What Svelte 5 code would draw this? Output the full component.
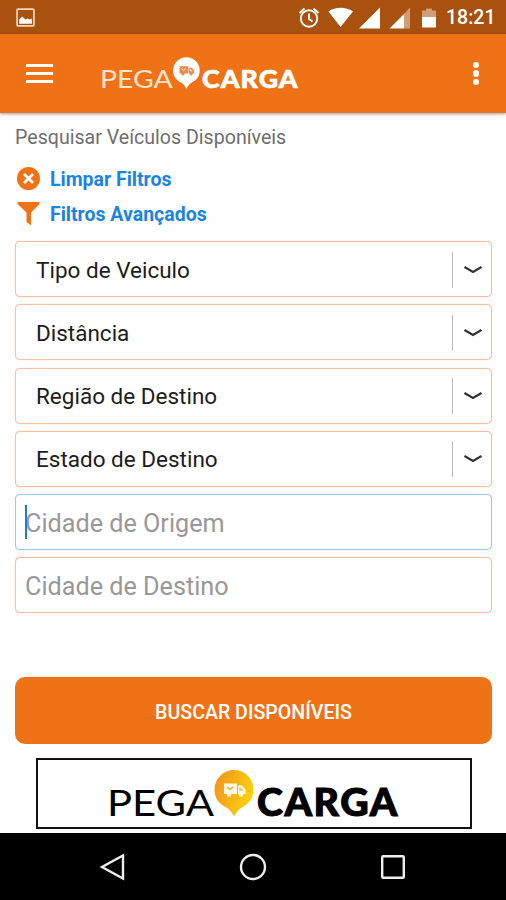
<script lang="ts">
	const selects: string[] = [
		'Tipo de Veiculo',
		'Distância',
		'Região de Destino',
		'Estado de Destino'
	];

	let origin = $state('');
	let destination = $state('');
</script>

{#snippet logo(kind: string)}
	<svg class="logo {kind}" viewBox="0 0 288 48">
		<defs>
			<linearGradient id="pin" x1="0" y1="0" x2="1" y2="0.4">
				<stop offset="0" stop-color="#f0901d" />
				<stop offset="1" stop-color="#fcd00d" />
			</linearGradient>
		</defs>
		<text class="thin" x="-3" y="46" textLength="107" lengthAdjust="spacingAndGlyphs">PEGA</text>
		<path
			class="pin"
			d="M124 0a19.500 19.500 0 0 1 19.500 19.500c0 9-5 14.500-11 17.500-4 2-6.500 6-8.500 9.500-2-3.500-4.500-7.500-8.500-9.500-6-3-11-8.500-11-17.500A19.500 19.500 0 0 1 124 0z"
		/>
		<g class="truck">
			<path d="M114 13.500h13v10.500h-13zM128 15.500h4l3.500 4v4.500h-7.500z" />
			<circle cx="119" cy="24.500" r="2.300" />
			<circle cx="131" cy="24.500" r="2.300" />
		</g>
		<path class="mark" d="M117 17l3 2.500 3-2.500M130 17.500v2.500h3" />
		<text class="heavy" x="147" y="46" textLength="142" lengthAdjust="spacingAndGlyphs">CARGA</text>
	</svg>
{/snippet}

<div class="screen">
	<div class="status">
		<svg class="picture" viewBox="0 0 18 18">
			<rect x="1" y="1" width="16" height="16" rx="1" fill="none" stroke="#f3d5c0" stroke-width="1.6" />
			<path d="M3 15v-4l3-3 3 3 2-1 2 1 2-1v5z" fill="#fff" />
		</svg>
		<svg class="indicators" viewBox="0 0 140 24">
			<g fill="none" stroke="#fff" stroke-width="1.9">
				<circle cx="10" cy="12.500" r="8.200" />
				<path d="M10 7.500v5.500l3.500 2.500M.5 7l5-4.500M19.500 7l-5-4.500" />
			</g>
			<g fill="#fff">
				<path d="M29.500 5.500C36 .5 47 .5 54 5.500L41.500 21z" />
				<path d="M81 1.500v21H60z" />
				<path d="M105.500 7.500v15H90.500z" />
				<path d="M123 10.500h14V21.500h-14z" />
			</g>
			<g fill="#cf9d78">
				<path d="M105.500 7.500l5.500-6v21h-5.500z" />
				<path d="M123 4.500h4v-2h6v2h4v6h-14z" />
			</g>
		</svg>
		<span class="clock">18:21</span>
	</div>

	<header>
		<button class="menu" aria-label="Menu">
			<span></span>
			<span></span>
			<span></span>
		</button>
		{@render logo('white')}
		<button class="more" aria-label="Mais">
			<span></span>
			<span></span>
			<span></span>
		</button>
	</header>

	<main>
		<h1>Pesquisar Veículos Disponíveis</h1>

		<a class="filter" href="#limpar">
			<svg viewBox="0 0 24 24">
				<circle cx="12.500" cy="11.500" r="11.500" fill="#ef7316" />
				<path d="M8 7l9 9m0-9l-9 9" stroke="#fff" stroke-width="2.800" />
			</svg>
			<span>Limpar Filtros</span>
		</a>
		<a class="filter" href="#avancados">
			<svg viewBox="0 0 24 24">
				<path d="M1.500 0h22v2L15 10.500v13L10.500 20v-9.500L1.500 2z" fill="#ef7316" />
			</svg>
			<span>Filtros Avançados</span>
		</a>

		<div class="fields">
			{#each selects as label}
				<button class="field select">
					<span class="label">{label}</span>
					<svg viewBox="0 0 18 8">
						<path d="M.5 1l8.500 5 8.500-5" fill="none" stroke="#333" stroke-width="2.200" />
					</svg>
				</button>
			{/each}
			<div class="field focused">
				<span class="caret"></span>
				<input placeholder="Cidade de Origem" bind:value={origin} />
			</div>
			<div class="field">
				<input placeholder="Cidade de Destino" bind:value={destination} />
			</div>
		</div>

		<button class="search">BUSCAR DISPONÍVEIS</button>

		<div class="banner">
			{@render logo('color')}
		</div>
	</main>

	<nav>
		<svg viewBox="0 0 28 28">
			<path d="M24 2.500v23L3 14z" />
		</svg>
		<svg viewBox="0 0 28 28">
			<circle cx="14" cy="14" r="12" />
		</svg>
		<svg viewBox="0 0 28 28">
			<rect x="3.200" y="3.200" width="21.600" height="21.600" rx="1" />
		</svg>
	</nav>
</div>

<style>
	:global(body) {
		margin: 0;
	}

	.screen {
		display: flex;
		flex-direction: column;
		width: 506px;
		height: 900px;
		overflow: hidden;
		background: #fefefe;
		font-family: Roboto, sans-serif;
	}

	button {
		border: 0;
		padding: 0;
		background: none;
		font-family: inherit;
	}

	svg {
		display: block;
		flex: none;
	}

	.status {
		display: flex;
		align-items: center;
		box-sizing: border-box;
		height: 34px;
		padding: 1px 11px 0 16px;
		background: #a9510f;
	}

	.picture {
		width: 19px;
		height: 19px;
	}

	.indicators {
		width: 140px;
		height: 24px;
		margin-left: auto;
	}

	.clock {
		width: 49px;
		margin-left: 7px;
		color: #fff;
		font-size: 19.5px;
		font-weight: 500;
		line-height: 36px;
		white-space: nowrap;
	}

	header {
		display: flex;
		align-items: center;
		box-sizing: border-box;
		height: 79px;
		padding: 0 27px 0 26px;
		background: #ef7316;
		box-shadow: 0 1px 3px rgba(0, 0, 0, 0.4);
	}

	.menu {
		display: grid;
		gap: 5px;
		width: 27px;
	}

	.menu span {
		height: 3px;
		background: #fff;
	}

	.more {
		display: grid;
		gap: 2.4px;
		margin-left: auto;
	}

	.more span {
		width: 6.4px;
		height: 6.4px;
		border-radius: 50%;
		background: #fff;
	}

	.logo {
		font-family: Lato, sans-serif;
		font-size: 37px;
		overflow: visible;
	}

	.thin {
		font-weight: 400;
	}

	.heavy {
		font-weight: 900;
		letter-spacing: 1.5px;
		stroke-width: 1;
	}

	.white {
		width: 196px;
		height: 33px;
		margin-left: 49px;
		fill: #fff;
	}

	.white .thin {
		fill: #ffe3cf;
	}

	.white .heavy {
		stroke: #fff;
	}

	.white .truck {
		fill: #e98a4a;
	}

	.color .heavy {
		stroke: #000;
	}

	.color .pin {
		fill: url(#pin);
	}

	.color .truck {
		fill: #fff8e0;
	}

	.mark {
		fill: none;
		stroke: #f5a623;
		stroke-width: 1.2;
	}

	.white .mark {
		stroke: #fff;
	}

	main {
		display: flex;
		flex-direction: column;
		flex: 1;
		padding: 0 14px 0 15px;
	}

	h1 {
		margin: 12px 0 10px;
		color: #6e6e6e;
		font-size: 19.6px;
		font-weight: 400;
		line-height: 26px;
	}

	.filter {
		display: flex;
		align-items: center;
		gap: 10px;
		height: 35px;
		padding-left: 1px;
		color: #1a84e0;
		font-size: 19.5px;
		font-weight: 700;
		text-decoration: none;
	}

	.filter span {
		padding-top: 1px;
	}

	.filter svg {
		width: 24px;
		height: 24px;
	}

	.fields {
		display: grid;
		gap: 7.3px;
		margin-top: 10px;
	}

	.field {
		display: flex;
		align-items: center;
		box-sizing: border-box;
		width: 100%;
		height: 56px;
		padding: 2px 9px 0;
		border: 1px solid #f7bfa6;
		border-radius: 5px;
		background: #fff;
		box-shadow: 0 0 1px #f7bfa6;
	}

	.select {
		padding: 1px 9px 0 20px;
		color: #1c1c1c;
		font-size: 22.5px;
	}

	.label {
		flex: 1;
		text-align: left;
	}

	.select svg {
		box-sizing: content-box;
		width: 18px;
		height: 8px;
		padding: 14px 0 14px 11px;
		border-left: 1px solid #bdbdbd;
	}

	.focused {
		position: relative;
		border-color: #a0c8f2;
		box-shadow: 0 0 1px #a0c8f2;
	}

	.caret {
		position: absolute;
		left: 9px;
		top: 10px;
		width: 2px;
		height: 34px;
		background: #1a7fd8;
	}

	input {
		width: 100%;
		padding: 0;
		border: 0;
		outline: 0;
		background: none;
		color: #1c1c1c;
		font-family: inherit;
		font-size: 25.2px;
	}

	input::placeholder {
		color: #989898;
		opacity: 1;
	}

	.search {
		height: 67px;
		margin-top: 64px;
		padding-top: 3px;
		border-radius: 10px;
		background: #ef7316;
		color: #fff;
		font-size: 19.6px;
		font-weight: 500;
	}

	.banner {
		box-sizing: border-box;
		width: 436px;
		height: 71px;
		margin: 14px 0 0 21px;
		padding: 10px 0 0 72px;
		border: 2px solid #111;
		background: #fff;
	}

	.color {
		width: 288px;
		height: 48px;
	}

	nav {
		display: flex;
		justify-content: center;
		align-items: center;
		gap: 112px;
		height: 67px;
		background: #000;
	}

	nav svg {
		width: 28px;
		height: 28px;
		fill: none;
		stroke: #eee;
		stroke-width: 2.4;
	}
</style>
